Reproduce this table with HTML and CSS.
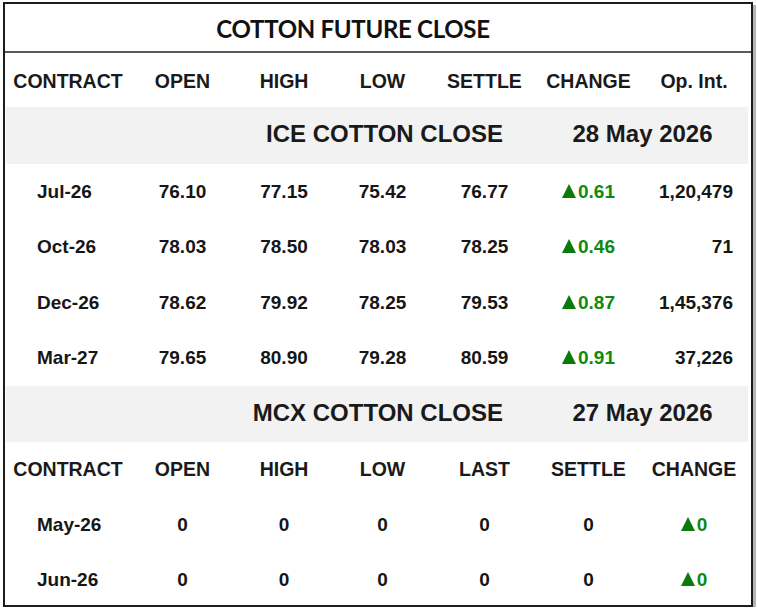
FILE: index.html
```html
<!DOCTYPE html>
<html>
<head>
<meta charset="utf-8">
<link rel="stylesheet" href="styles.css">
</head>
<body>
<div class="card">
  <div class="title">COTTON FUTURE CLOSE</div>
  <table class="grid">
    <colgroup>
      <col class="c1"><col class="c2"><col class="c3"><col class="c4"><col class="c5"><col class="c6"><col class="c7">
    </colgroup>
    <tr class="head h1">
      <th>CONTRACT</th><th>OPEN</th><th>HIGH</th><th>LOW</th><th>SETTLE</th><th>CHANGE</th><th>Op. Int.</th>
    </tr>
    <tr class="band b1">
      <td colspan="5" class="band-name">ICE COTTON CLOSE</td>
      <td colspan="2" class="band-date">28 May 2026</td>
    </tr>
    <tr class="row r55">
      <td class="name">Jul-26</td><td>76.10</td><td>77.15</td><td>75.42</td><td>76.77</td><td class="up"><span class="tri"></span>0.61</td><td class="oi">1,20,479</td>
    </tr>
    <tr class="row r56">
      <td class="name">Oct-26</td><td>78.03</td><td>78.50</td><td>78.03</td><td>78.25</td><td class="up"><span class="tri"></span>0.46</td><td class="oi">71</td>
    </tr>
    <tr class="row r55">
      <td class="name">Dec-26</td><td>78.62</td><td>79.92</td><td>78.25</td><td>79.53</td><td class="up"><span class="tri"></span>0.87</td><td class="oi">1,45,376</td>
    </tr>
    <tr class="row r56">
      <td class="name">Mar-27</td><td>79.65</td><td>80.90</td><td>79.28</td><td>80.59</td><td class="up"><span class="tri"></span>0.91</td><td class="oi">37,226</td>
    </tr>
    <tr class="band b2">
      <td colspan="5" class="band-name">MCX COTTON CLOSE</td>
      <td colspan="2" class="band-date">27 May 2026</td>
    </tr>
    <tr class="head h2">
      <th>CONTRACT</th><th>OPEN</th><th>HIGH</th><th>LOW</th><th>LAST</th><th>SETTLE</th><th>CHANGE</th>
    </tr>
    <tr class="row r55">
      <td class="name">May-26</td><td>0</td><td>0</td><td>0</td><td>0</td><td>0</td><td class="up"><span class="tri"></span>0</td>
    </tr>
    <tr class="row r55">
      <td class="name">Jun-26</td><td>0</td><td>0</td><td>0</td><td>0</td><td>0</td><td class="up"><span class="tri"></span>0</td>
    </tr>
  </table>
</div>
</body>
</html>
```

FILE: styles.css
```css
html, body {
  margin: 0;
  padding: 0;
  background: #ffffff;
}

.card {
  box-sizing: border-box;
  width: 750px;
  height: 605px;
  margin: 2px 0 0 3px;
  border: 2px solid #1c1c1c;
  box-shadow: 3px 3px 0 #b5b5b5;
  background: #fff;
  overflow: hidden;
  font-family: "Liberation Sans", Arial, sans-serif;
  color: #161616;
}

.title {
  box-sizing: border-box;
  height: 49px;
  border-bottom: 2px solid #5a5a5a;
  display: flex;
  align-items: center;
  justify-content: center;
  font-family: Lato, "Liberation Sans", sans-serif;
  font-weight: 700;
  font-size: 24px;
  letter-spacing: -0.3px;
  color: #111;
  padding: 1px 50px 0 0;
}

.grid {
  border-collapse: collapse;
  table-layout: fixed;
  width: 742px;
  margin-left: 1px;
}

.c1 { width: 124px; }
.c2 { width: 105px; }
.c3 { width: 98px; }
.c4 { width: 99px; }
.c5 { width: 105px; }
.c6 { width: 103px; }
.c7 { width: 108px; }

.grid th,
.grid td {
  padding: 0;
  text-align: center;
  font-weight: 700;
  white-space: nowrap;
}

.head th {
  font-size: 19.5px;
  color: #1a1a1a;
}

.h1 { height: 54px; }
.h1 th { padding-top: 3px; }
.h2 { height: 55px; }

.band td {
  background: #f2f2f2;
  font-size: 24px;
  color: #1a1a1a;
  padding-bottom: 3px;
}

.b1 { height: 57px; }
.b2 { height: 56px; }

.band .band-name {
  text-align: right;
  padding-right: 34px;
}

.row td {
  font-size: 19px;
  color: #161616;
}

.r55 { height: 55px; }
.r56 { height: 56px; }

.row .name {
  text-align: left;
  padding-left: 31px;
}

.row .oi {
  text-align: right;
  padding-right: 15px;
}

.row .up {
  color: #0f8a0f;
}

.tri {
  display: inline-block;
  width: 0;
  height: 0;
  border-left: 7px solid transparent;
  border-right: 7px solid transparent;
  border-bottom: 14px solid #0a7a0a;
  margin-right: 2px;
  vertical-align: baseline;
}
```
